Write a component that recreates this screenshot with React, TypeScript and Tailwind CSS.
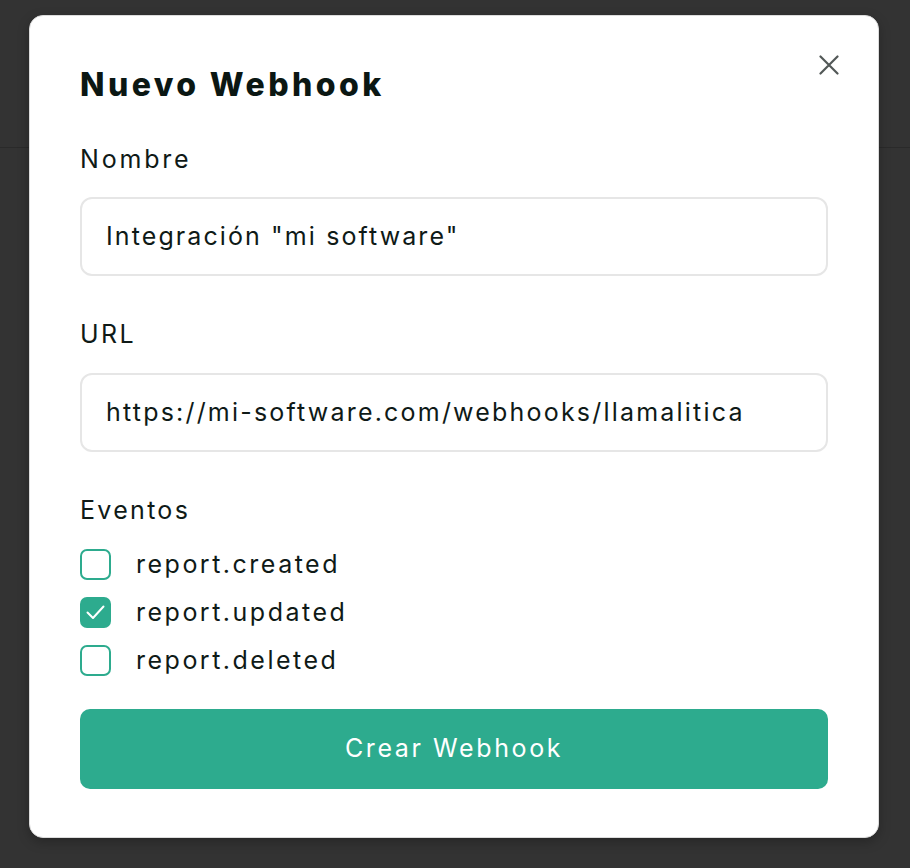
import React from "react";

const events = [
  { name: "report.created", checked: false },
  { name: "report.updated", checked: true },
  { name: "report.deleted", checked: false },
];

function CheckBox({ checked }: { checked: boolean }) {
  if (checked) {
    return (
      <div className="flex h-[31px] w-[31px] shrink-0 items-center justify-center rounded-[7px] bg-[#2dab8e]">
        <svg width="31" height="31" viewBox="0 0 31 31" fill="none">
          <path d="M7.5 15.5 L13 21 L23.5 9.5" stroke="white" strokeWidth="2" strokeLinecap="round" strokeLinejoin="round" />
        </svg>
      </div>
    );
  }
  return <div className="h-[31px] w-[31px] shrink-0 rounded-[7px] border-2 border-[#2dab8e] bg-white" />;
}

export default function App() {
  return (
    <div className="relative h-[868px] w-[910px] overflow-hidden bg-[#333333] font-['Inter',sans-serif]">
      <div className="h-[148px] border-b border-[#2a2a2a]" />
      <div className="absolute left-[29px] top-[15px] w-[850px] rounded-[14px] border border-[#dcdcdc] bg-white px-[50px] pb-[48px] pt-[49px] shadow-[0_4px_12px_rgba(0,0,0,0.25)]">
        <button className="absolute right-[39px] top-[39px] flex h-[20px] w-[20px] items-center justify-center text-[#525857]">
          <svg width="20" height="20" viewBox="0 0 20 20" fill="none">
            <path d="M1.5 1.5 L18.5 18.5 M18.5 1.5 L1.5 18.5" stroke="currentColor" strokeWidth="2.2" strokeLinecap="round" />
          </svg>
        </button>
        <h1 className="text-[32px] font-extrabold leading-[40px] tracking-[3.4px] text-[#0b1713]">Nuevo Webhook</h1>

        <label className="mt-[38px] block text-[25px] leading-[32px] tracking-[2.8px] text-[#0f1a17]">Nombre</label>
        <div className="mt-[22px] flex h-[79px] items-center rounded-[12px] border-2 border-[#e6e6e6] px-[24px] text-[25px] tracking-[2.1px] text-[#0f1a17]">
          Integración "mi software"
        </div>

        <label className="mt-[42px] block text-[25px] leading-[32px] tracking-[2.4px] text-[#0f1a17]">URL</label>
        <div className="mt-[23px] flex h-[79px] items-center rounded-[12px] border-2 border-[#e6e6e6] px-[24px] text-[25px] tracking-[2.2px] text-[#0f1a17]">
          https://mi-software.com/webhooks/llamalitica
        </div>

        <label className="mt-[42px] block text-[25px] leading-[32px] tracking-[2.3px] text-[#0f1a17]">Eventos</label>
        <div className="mt-[23px] flex flex-col gap-[17px]">
          {events.map((e) => (
            <div key={e.name} className="flex h-[31px] items-center gap-[25px]">
              <CheckBox checked={e.checked} />
              <span className="text-[25px] leading-[31px] tracking-[2.5px] text-[#0f1a17]">{e.name}</span>
            </div>
          ))}
        </div>

        <button className="mt-[33px] flex h-[80px] w-full items-center justify-center rounded-[10px] bg-[#2dab8e] text-[25px] tracking-[2.6px] text-white">
          Crear Webhook
        </button>
      </div>
    </div>
  );
}
